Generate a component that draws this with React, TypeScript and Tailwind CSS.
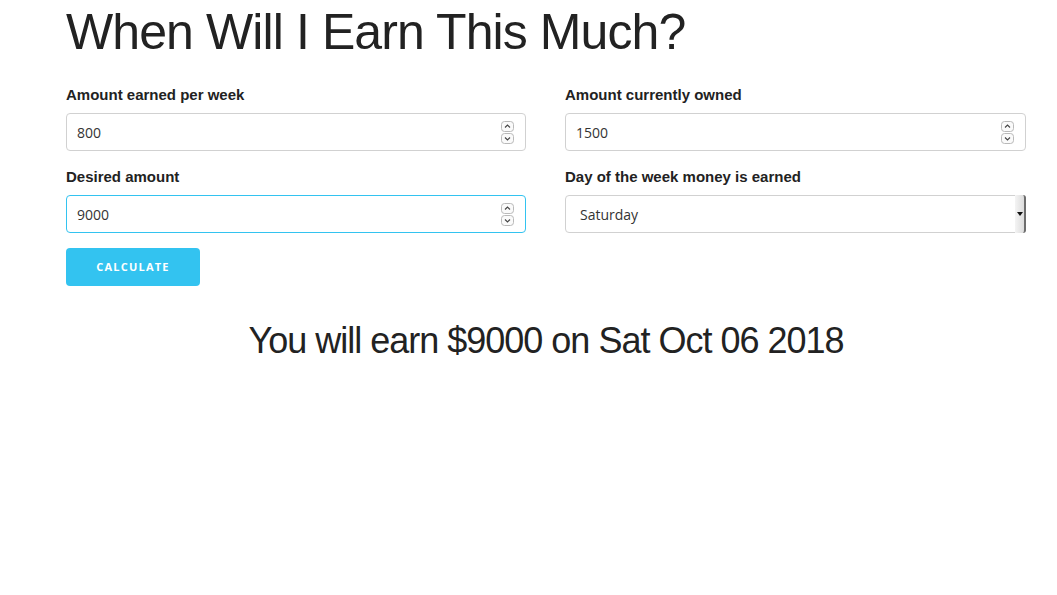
const sans = { fontFamily: '"Liberation Sans", Arial, sans-serif' };

function Spinner() {
  return (
    <div className="absolute right-[11px] top-[7px] flex flex-col gap-[1px]">
      <svg width="13" height="11" viewBox="0 0 13 11">
        <rect x="0.5" y="0.5" width="12" height="10" rx="3" fill="#fafafa" stroke="#b9b9b9" />
        <path d="M4 6.5 L6.5 4 L9 6.5" fill="none" stroke="#444" strokeWidth="1.1" />
      </svg>
      <svg width="13" height="11" viewBox="0 0 13 11">
        <rect x="0.5" y="0.5" width="12" height="10" rx="3" fill="#fafafa" stroke="#b9b9b9" />
        <path d="M4 4.5 L6.5 7 L9 4.5" fill="none" stroke="#444" strokeWidth="1.1" />
      </svg>
    </div>
  );
}

function NumberField({ label, value, focused }: { label: string; value: string; focused?: boolean }) {
  return (
    <div className="mb-[15px]">
      <label className="block mb-[7px] text-[15px] leading-[22px] font-bold text-[#222]" style={sans}>
        {label}
      </label>
      <div
        className={
          'relative h-[38px] rounded-[4px] bg-white border ' +
          (focused ? 'border-[#33c3f0]' : 'border-[#d1d1d1]')
        }
      >
        <input
          readOnly
          value={value}
          className="w-full h-full bg-transparent pl-[10px] text-[14px] text-[#333] outline-none"
          style={{ fontFamily: '"Open Sans", "DejaVu Sans", sans-serif' }}
        />
        <Spinner />
      </div>
    </div>
  );
}

export default function App() {
  return (
    <div className="min-h-[595px] bg-white text-[#222]" style={sans}>
      <div className="ml-[66px] w-[960px] pt-[2px]">
        <h1 className="text-[50px] leading-[60px] tracking-[-0.9px] font-normal mb-[22px]">
          When Will I Earn This Much?
        </h1>

        <div className="grid grid-cols-[460px_461px] gap-x-[39px]">
          <NumberField label="Amount earned per week" value="800" />
          <NumberField label="Amount currently owned" value="1500" />
          <NumberField label="Desired amount" value="9000" focused />

          <div className="mb-[15px]">
            <label className="block mb-[7px] text-[15px] leading-[22px] font-bold text-[#222]">
              Day of the week money is earned
            </label>
            <div className="relative h-[38px] rounded-[4px] bg-white border border-[#d1d1d1]">
              <div
                className="h-full flex items-center pl-[14px] text-[14px] text-[#333]"
                style={{ fontFamily: '"Open Sans", "DejaVu Sans", sans-serif' }}
              >
                Saturday
              </div>
              <div className="absolute right-[-1px] top-[-1px] bottom-[-1px] w-[11px] bg-gradient-to-r from-[#f4f4f4] to-[#dcdcdc] border-r-2 border-[#6d6d6d] rounded-r-[3px] flex items-center justify-center">
                <svg width="6" height="4" viewBox="0 0 6 4">
                  <path d="M0 0 H6 L3 4 Z" fill="#111" />
                </svg>
              </div>
            </div>
          </div>
        </div>

        <button
          className="w-[134px] h-[38px] rounded-[4px] bg-[#33c3f0] text-white text-[11px] font-bold tracking-[1.2px] uppercase"
          style={{ fontFamily: '"Open Sans", "DejaVu Sans", sans-serif' }}
        >
          Calculate
        </button>

        <h3 className="mt-[31px] text-center text-[36px] leading-[47px] tracking-[-1px] font-normal">
          You will earn $9000 on Sat Oct 06 2018
        </h3>
      </div>
    </div>
  );
}
